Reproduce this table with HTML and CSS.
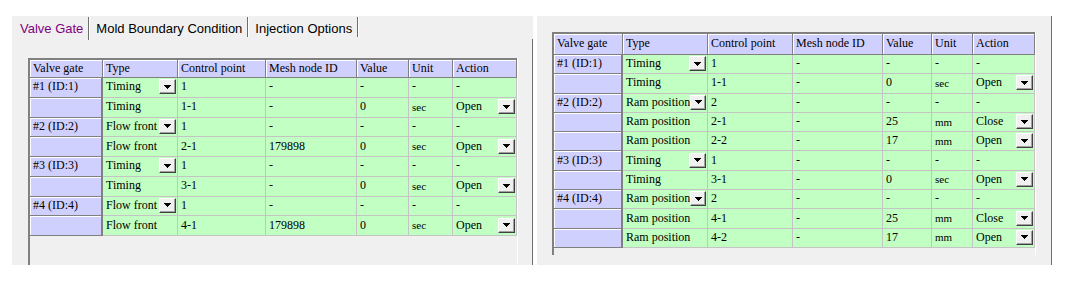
FILE: index.html
```html
<!DOCTYPE html>
<html>
<head>
<meta charset="utf-8">
<link rel="stylesheet" href="styles.css">
</head>
<body>
<div class="screen">
  <section class="panel panel-left">
    <div class="tabs">
      <div class="tab active">Valve Gate</div>
      <div class="tab">Mold Boundary Condition</div>
      <div class="tab">Injection Options</div>
    </div>
    <div class="tab-body">
      <div class="grid-box box-left">
        <div class="grid grid-left">
          <div class="h">Valve gate</div><div class="h">Type</div><div class="h">Control point</div><div class="h">Mesh node ID</div><div class="h">Value</div><div class="h">Unit</div><div class="h">Action</div>

          <div class="g">#1 (ID:1)</div><div class="c dd"><span>Timing</span><i class="btn"><svg width="7" height="4" viewBox="0 0 7 4"><path d="M0 0H7V1H6V2H5V3H4V4H3V3H2V2H1V1H0Z"/></svg></i></div><div class="c">1</div><div class="c">-</div><div class="c">-</div><div class="c">-</div><div class="c">-</div>
          <div class="g"></div><div class="c">Timing</div><div class="c">1-1</div><div class="c">-</div><div class="c">0</div><div class="c u">sec</div><div class="c dd"><span>Open</span><i class="btn"><svg width="7" height="4" viewBox="0 0 7 4"><path d="M0 0H7V1H6V2H5V3H4V4H3V3H2V2H1V1H0Z"/></svg></i></div>

          <div class="g">#2 (ID:2)</div><div class="c dd"><span>Flow front</span><i class="btn"><svg width="7" height="4" viewBox="0 0 7 4"><path d="M0 0H7V1H6V2H5V3H4V4H3V3H2V2H1V1H0Z"/></svg></i></div><div class="c">1</div><div class="c">-</div><div class="c">-</div><div class="c">-</div><div class="c">-</div>
          <div class="g"></div><div class="c">Flow front</div><div class="c">2-1</div><div class="c">179898</div><div class="c">0</div><div class="c u">sec</div><div class="c dd"><span>Open</span><i class="btn"><svg width="7" height="4" viewBox="0 0 7 4"><path d="M0 0H7V1H6V2H5V3H4V4H3V3H2V2H1V1H0Z"/></svg></i></div>

          <div class="g">#3 (ID:3)</div><div class="c dd"><span>Timing</span><i class="btn"><svg width="7" height="4" viewBox="0 0 7 4"><path d="M0 0H7V1H6V2H5V3H4V4H3V3H2V2H1V1H0Z"/></svg></i></div><div class="c">1</div><div class="c">-</div><div class="c">-</div><div class="c">-</div><div class="c">-</div>
          <div class="g"></div><div class="c">Timing</div><div class="c">3-1</div><div class="c">-</div><div class="c">0</div><div class="c u">sec</div><div class="c dd"><span>Open</span><i class="btn"><svg width="7" height="4" viewBox="0 0 7 4"><path d="M0 0H7V1H6V2H5V3H4V4H3V3H2V2H1V1H0Z"/></svg></i></div>

          <div class="g">#4 (ID:4)</div><div class="c dd"><span>Flow front</span><i class="btn"><svg width="7" height="4" viewBox="0 0 7 4"><path d="M0 0H7V1H6V2H5V3H4V4H3V3H2V2H1V1H0Z"/></svg></i></div><div class="c">1</div><div class="c">-</div><div class="c">-</div><div class="c">-</div><div class="c">-</div>
          <div class="g"></div><div class="c">Flow front</div><div class="c">4-1</div><div class="c">179898</div><div class="c">0</div><div class="c u">sec</div><div class="c dd"><span>Open</span><i class="btn"><svg width="7" height="4" viewBox="0 0 7 4"><path d="M0 0H7V1H6V2H5V3H4V4H3V3H2V2H1V1H0Z"/></svg></i></div>
        </div>
      </div>
    </div>
  </section>

  <section class="panel panel-right">
    <div class="grid-box box-right">
      <div class="grid grid-right">
        <div class="h">Valve gate</div><div class="h">Type</div><div class="h">Control point</div><div class="h">Mesh node ID</div><div class="h">Value</div><div class="h">Unit</div><div class="h">Action</div>

        <div class="g">#1 (ID:1)</div><div class="c dd"><span>Timing</span><i class="btn"><svg width="7" height="4" viewBox="0 0 7 4"><path d="M0 0H7V1H6V2H5V3H4V4H3V3H2V2H1V1H0Z"/></svg></i></div><div class="c">1</div><div class="c">-</div><div class="c">-</div><div class="c">-</div><div class="c">-</div>
        <div class="g"></div><div class="c">Timing</div><div class="c">1-1</div><div class="c">-</div><div class="c">0</div><div class="c u">sec</div><div class="c dd"><span>Open</span><i class="btn"><svg width="7" height="4" viewBox="0 0 7 4"><path d="M0 0H7V1H6V2H5V3H4V4H3V3H2V2H1V1H0Z"/></svg></i></div>

        <div class="g">#2 (ID:2)</div><div class="c dd"><span>Ram position</span><i class="btn"><svg width="7" height="4" viewBox="0 0 7 4"><path d="M0 0H7V1H6V2H5V3H4V4H3V3H2V2H1V1H0Z"/></svg></i></div><div class="c">2</div><div class="c">-</div><div class="c">-</div><div class="c">-</div><div class="c">-</div>
        <div class="g"></div><div class="c">Ram position</div><div class="c">2-1</div><div class="c">-</div><div class="c">25</div><div class="c u">mm</div><div class="c dd"><span>Close</span><i class="btn"><svg width="7" height="4" viewBox="0 0 7 4"><path d="M0 0H7V1H6V2H5V3H4V4H3V3H2V2H1V1H0Z"/></svg></i></div>
        <div class="g"></div><div class="c">Ram position</div><div class="c">2-2</div><div class="c">-</div><div class="c">17</div><div class="c u">mm</div><div class="c dd"><span>Open</span><i class="btn"><svg width="7" height="4" viewBox="0 0 7 4"><path d="M0 0H7V1H6V2H5V3H4V4H3V3H2V2H1V1H0Z"/></svg></i></div>

        <div class="g">#3 (ID:3)</div><div class="c dd"><span>Timing</span><i class="btn"><svg width="7" height="4" viewBox="0 0 7 4"><path d="M0 0H7V1H6V2H5V3H4V4H3V3H2V2H1V1H0Z"/></svg></i></div><div class="c">1</div><div class="c">-</div><div class="c">-</div><div class="c">-</div><div class="c">-</div>
        <div class="g"></div><div class="c">Timing</div><div class="c">3-1</div><div class="c">-</div><div class="c">0</div><div class="c u">sec</div><div class="c dd"><span>Open</span><i class="btn"><svg width="7" height="4" viewBox="0 0 7 4"><path d="M0 0H7V1H6V2H5V3H4V4H3V3H2V2H1V1H0Z"/></svg></i></div>

        <div class="g">#4 (ID:4)</div><div class="c dd"><span>Ram position</span><i class="btn"><svg width="7" height="4" viewBox="0 0 7 4"><path d="M0 0H7V1H6V2H5V3H4V4H3V3H2V2H1V1H0Z"/></svg></i></div><div class="c">2</div><div class="c">-</div><div class="c">-</div><div class="c">-</div><div class="c">-</div>
        <div class="g"></div><div class="c">Ram position</div><div class="c">4-1</div><div class="c">-</div><div class="c">25</div><div class="c u">mm</div><div class="c dd"><span>Close</span><i class="btn"><svg width="7" height="4" viewBox="0 0 7 4"><path d="M0 0H7V1H6V2H5V3H4V4H3V3H2V2H1V1H0Z"/></svg></i></div>
        <div class="g"></div><div class="c">Ram position</div><div class="c">4-2</div><div class="c">-</div><div class="c">17</div><div class="c u">mm</div><div class="c dd"><span>Open</span><i class="btn"><svg width="7" height="4" viewBox="0 0 7 4"><path d="M0 0H7V1H6V2H5V3H4V4H3V3H2V2H1V1H0Z"/></svg></i></div>
      </div>
    </div>
  </section>
</div>
</body>
</html>
```

FILE: styles.css
```css
* { box-sizing: border-box; }
html, body { margin: 0; padding: 0; background: #ffffff; }
body { width: 1067px; height: 282px; overflow: hidden; }

.screen {
  display: flex;
  align-items: flex-start;
  padding: 16px 0 0 12px;
}

.panel {
  background: #f0f0f0;
  height: 249px;
}

.panel-left {
  width: 521px;
  display: flex;
  flex-direction: column;
}

.panel-right {
  width: 515px;
  margin-left: 4px;
  border-right: 1px solid #6e6e6e;
  padding: 16px 0 0 15px;
}

.tabs {
  display: flex;
  height: 23px;
  padding: 1px 0 0 2px;
  font-family: "Liberation Sans", Arial, sans-serif;
  font-size: 13px;
  color: #000;
}

.tab {
  height: 20px;
  line-height: 19px;
  padding: 2px 5px 0 6px;
  border-right: 1px solid #6e6e6e;
  box-shadow: 1px 0 0 #ffffff;
  white-space: nowrap;
}

.tab.active {
  color: #800080;
  height: 23px;
}

.tab + .tab { margin-left: 1px; }

.tab-body {
  flex: 1;
  border-right: 1px solid #6e6e6e;
  padding: 19px 0 0 16px;
}

.grid-box {
  border-left: 2px solid #808080;
  border-right: 1px solid #ffffff;
}

.box-left { width: 490px; height: 207px; }
.box-right { width: 484px; height: 223px; }

.grid {
  display: grid;
  border-top: 2px solid #808080;
  font-family: "Liberation Serif", "Times New Roman", serif;
  font-size: 12px;
  color: #000;
}

.grid-left {
  grid-template-columns: 73px 75px 88px 91px 52px 44px 64px;
  grid-template-rows: 18px;
  grid-auto-rows: 19.75px;
}

.grid-right {
  grid-template-columns: 69px 85px 85px 90px 49px 41px 62px;
  grid-template-rows: 21px;
  grid-auto-rows: 19.3px;
}

.grid > div {
  display: flex;
  align-items: center;
  padding: 0 0 1px 3px;
  white-space: nowrap;
  overflow: hidden;
}

.h, .g {
  background: #d0d0ff;
  border-right: 1px solid #808080;
  border-bottom: 1px solid #808080;
  box-shadow: inset 1px 1px 0 #ffffff;
}

.g { border-right-width: 2px; }

.c {
  background: #c2ffc2;
  border-right: 1px solid #c4c4c4;
  border-bottom: 1px solid #c4c4c4;
}

.u { font-size: 11px; }

.grid > .dd {
  justify-content: space-between;
  padding-right: 1px;
}

.btn {
  display: flex;
  align-items: center;
  justify-content: center;
  width: 17px;
  height: 15px;
  background: #f0f0f0;
  border: 1px solid;
  border-color: #ffffff #404040 #404040 #ffffff;
  box-shadow: inset -1px -1px 0 #a0a0a0;
}

.btn svg { display: block; fill: #000; }
```
